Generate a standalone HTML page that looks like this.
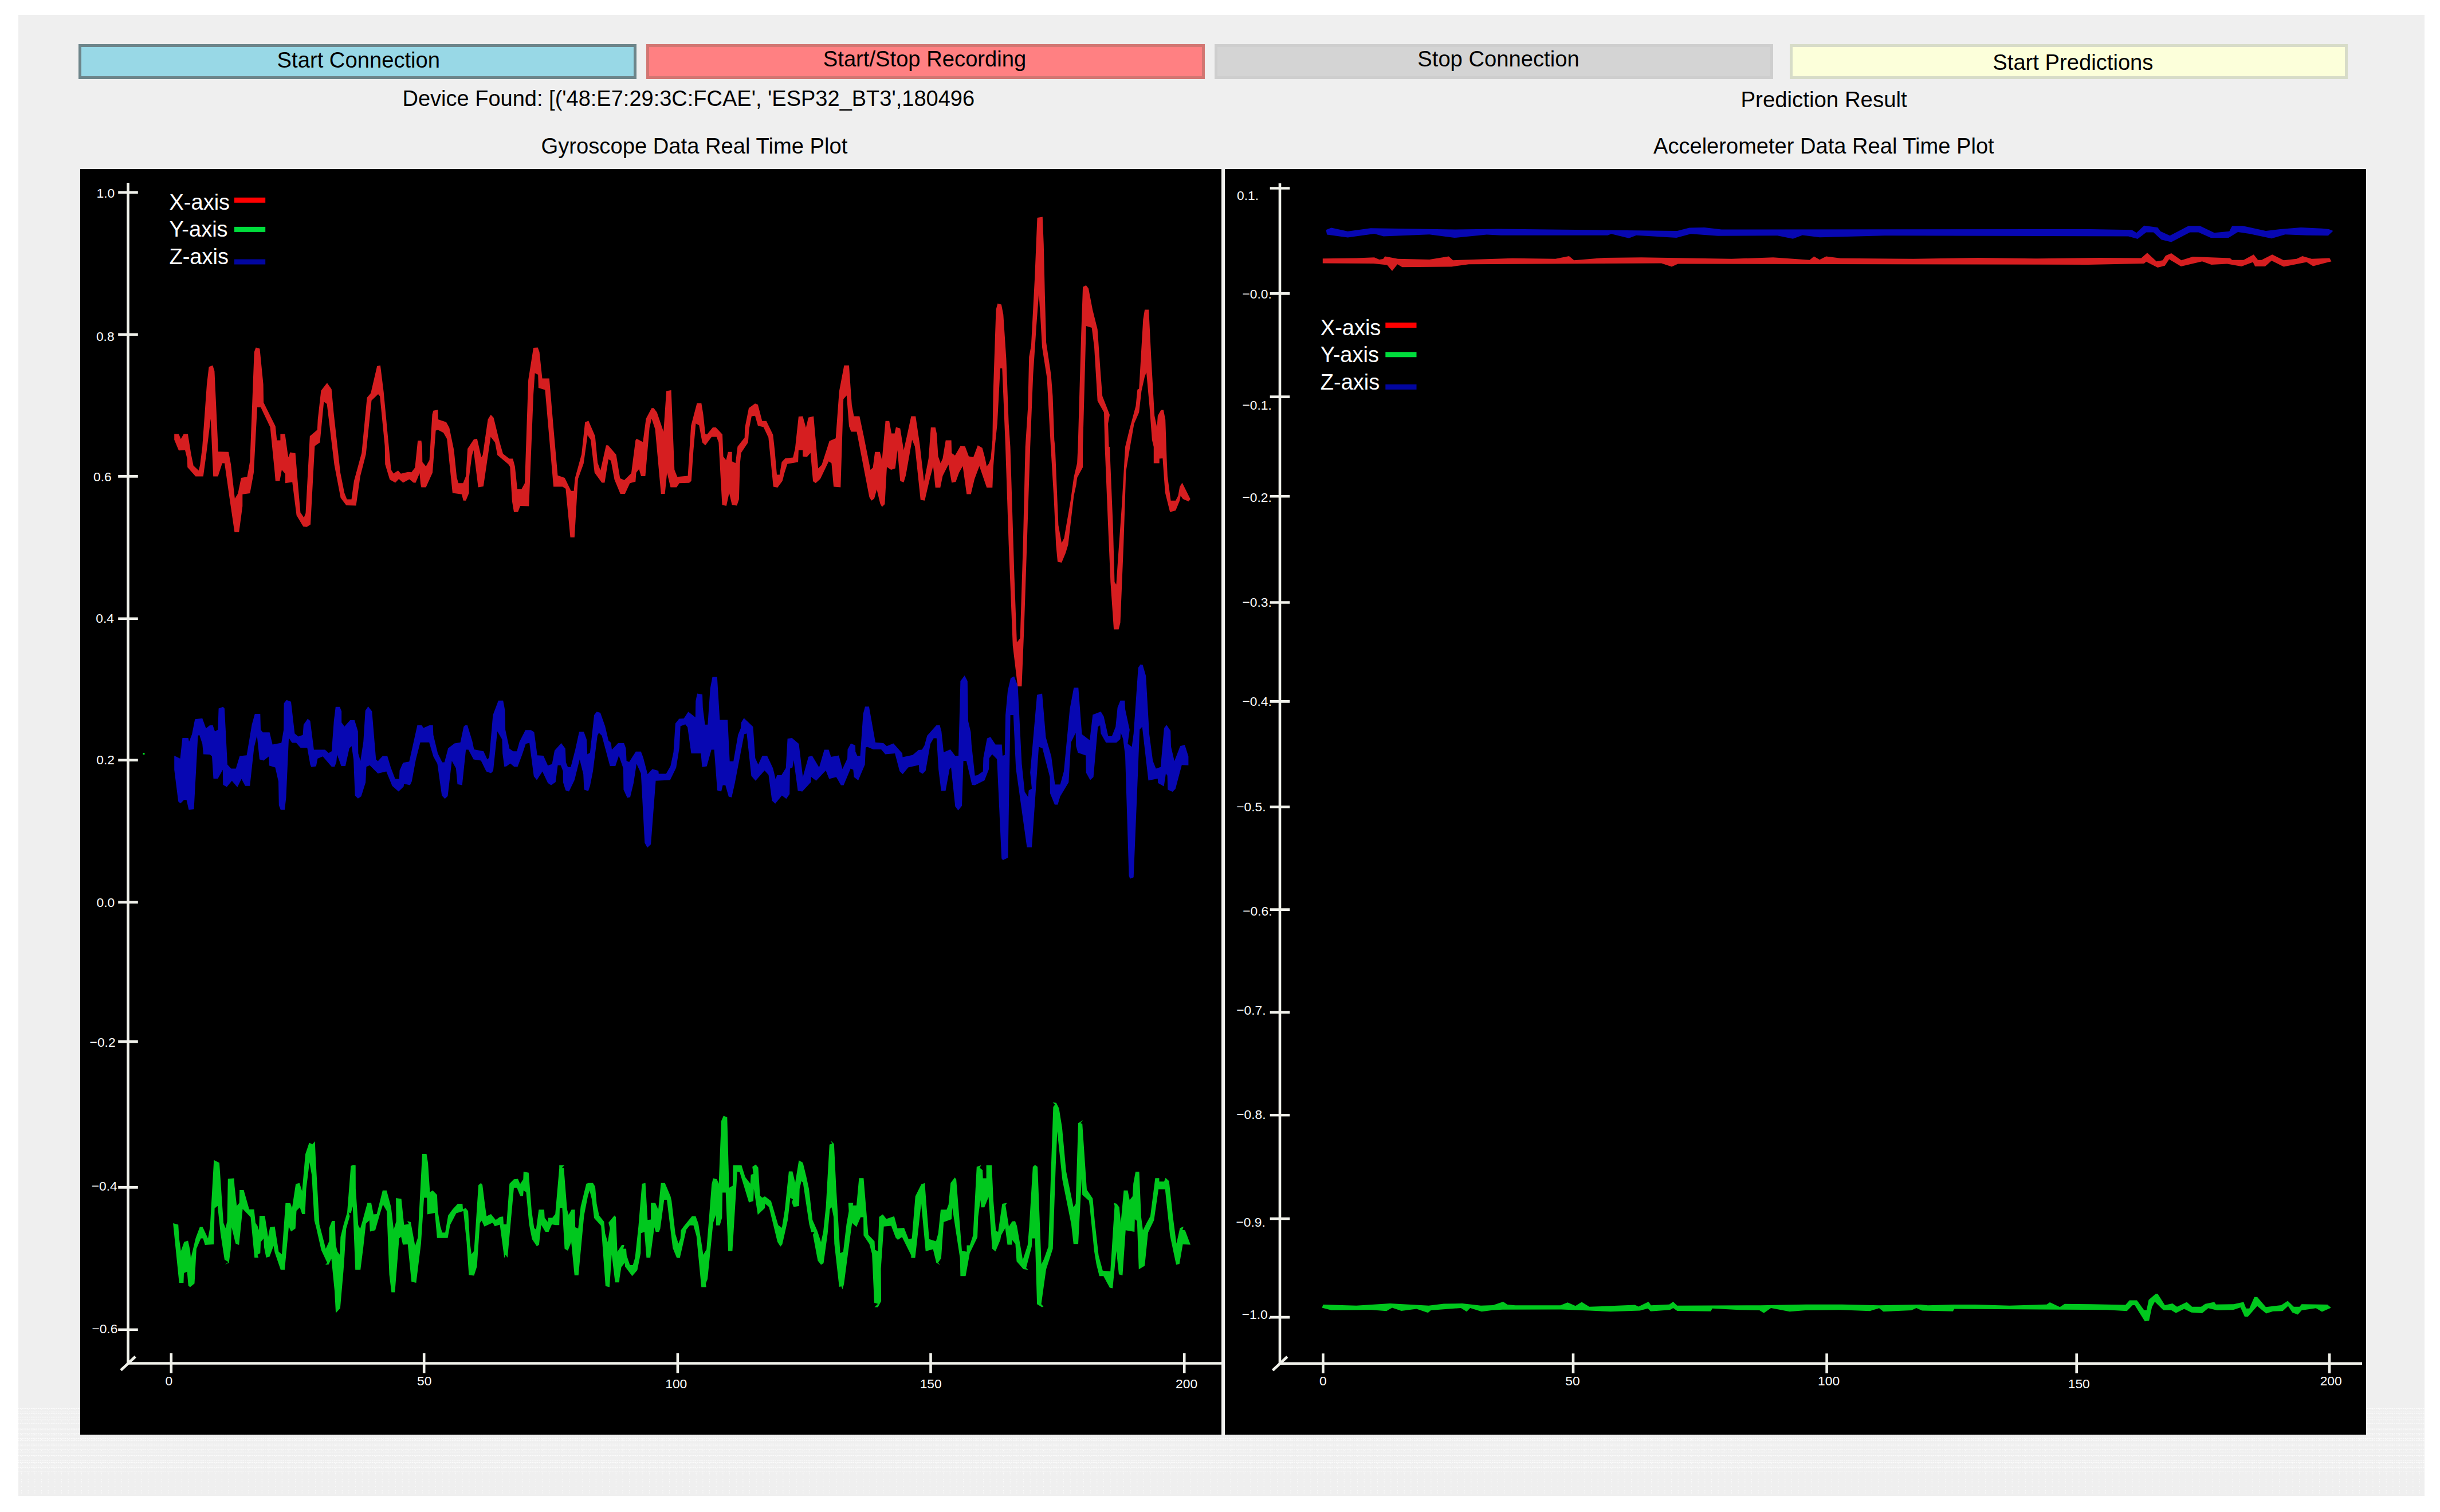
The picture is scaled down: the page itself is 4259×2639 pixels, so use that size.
<!DOCTYPE html>
<html><head><meta charset="utf-8"><title>IMU Real Time Plot</title>
<style>
html,body{margin:0;padding:0;background:#fff;}
body{width:4259px;height:2639px;position:relative;overflow:hidden;font-family:"Liberation Sans",sans-serif;color:#000;}
#panel{position:absolute;left:32px;top:26px;width:4200px;height:2585px;background:#efefef;}
.btn{position:absolute;top:77px;height:61px;box-sizing:border-box;border:5px solid;font-size:38.2px;text-align:left;white-space:nowrap;overflow:hidden;}
.lbl{position:absolute;font-size:38px;white-space:nowrap;line-height:44px;}
</style></head><body>
<div id="panel"></div>
<div class="btn" style="left:137px;width:974px;background:#98d8e6;border-color:#6d858a;line-height:46.8px;padding-left:341.6px">Start Connection</div>
<div class="btn" style="left:1128px;width:975px;background:#ff8082;border-color:#d27672;line-height:42.5px;padding-left:303.8px">Start/Stop Recording</div>
<div class="btn" style="left:2120px;width:975px;background:#d4d4d4;border-color:#cecece;line-height:42.5px;padding-left:349.3px">Stop Connection</div>
<div class="btn" style="left:3124px;width:974px;background:#fcffda;border-color:#d7dcc8;line-height:53.7px;padding-left:349.3px">Start Predictions</div>
<div class="lbl" id="dev" style="left:702.5px;top:150px">Device Found: [('48:E7:29:3C:FCAE', 'ESP32_BT3',180496</div>
<div class="lbl" id="pred" style="left:3038.5px;top:151.7px;font-size:38.4px">Prediction Result</div>
<div class="lbl" id="t1" style="left:944.5px;top:232.8px;font-size:38.2px">Gyroscope Data Real Time Plot</div>
<div class="lbl" id="t2" style="left:2886px;top:232.5px;font-size:38.1px">Accelerometer Data Real Time Plot</div>
<svg width="4259" height="2639" viewBox="0 0 4259 2639" style="position:absolute;left:0;top:0" font-family="Liberation Sans, sans-serif">
<g stroke="#fbfbfb" stroke-width="1.25" fill="none">
<line x1="32" y1="2458.4" x2="4232" y2="2458.4" stroke-dasharray="2.6 1.287" stroke-dashoffset="-2.7"/>
<line x1="32" y1="2464.4" x2="4232" y2="2464.4" stroke-dasharray="2.6 1.287" stroke-dashoffset="-2.7"/>
<line x1="32" y1="2467.4" x2="4232" y2="2467.4" stroke-dasharray="2.6 1.287" stroke-dashoffset="-2.7"/>
<line x1="32" y1="2473.4" x2="4232" y2="2473.4" stroke-dasharray="2.6 1.287" stroke-dashoffset="-2.7"/>
<line x1="32" y1="2478.1" x2="4232" y2="2478.1" stroke-dasharray="2.6 1.287" stroke-dashoffset="-2.7"/>
<line x1="32" y1="2484.1" x2="4232" y2="2484.1" stroke-dasharray="2.6 1.287" stroke-dashoffset="-2.7"/>
<line x1="32" y1="2492.5" x2="4232" y2="2492.5" stroke-dasharray="2.6 1.287" stroke-dashoffset="-2.7"/>
<line x1="32" y1="2495.6" x2="4232" y2="2495.6" stroke-dasharray="2.6 1.287" stroke-dashoffset="-2.7"/>
<line x1="32" y1="2501.5" x2="4232" y2="2501.5" stroke-dasharray="2.6 1.287" stroke-dashoffset="-2.7"/>
<line x1="32" y1="2504.6" x2="4232" y2="2504.6" stroke-dasharray="2.6 1.287" stroke-dashoffset="-2.7"/>
<line x1="32" y1="2510.4" x2="4232" y2="2510.4" stroke-dasharray="2.6 1.287" stroke-dashoffset="-2.7"/>
<line x1="32" y1="2514.7" x2="4232" y2="2514.7" stroke-dasharray="2.6 1.287" stroke-dashoffset="-2.7"/>
<line x1="32" y1="2520.3" x2="4232" y2="2520.3" stroke-dasharray="2.6 1.287" stroke-dashoffset="-2.7"/>
<line x1="32" y1="2523.7" x2="4232" y2="2523.7" stroke-dasharray="2.6 1.287" stroke-dashoffset="-2.7"/>
<line x1="32" y1="2529.3" x2="4232" y2="2529.3" stroke-dasharray="2.6 1.287" stroke-dashoffset="-2.7"/>
<line x1="32" y1="2534.4" x2="4232" y2="2534.4" stroke-dasharray="2.6 1.287" stroke-dashoffset="-2.7"/>
<line x1="32" y1="2540.3" x2="4232" y2="2540.3" stroke-dasharray="2.6 1.287" stroke-dashoffset="-2.7"/>
<line x1="32" y1="2549.6" x2="4232" y2="2549.6" stroke-dasharray="2.6 1.287" stroke-dashoffset="-2.7"/>
<line x1="32" y1="2552.6" x2="4232" y2="2552.6" stroke-dasharray="2.6 1.287" stroke-dashoffset="-2.7"/>
<line x1="32" y1="2558.5" x2="4232" y2="2558.5" stroke-dasharray="2.6 1.287" stroke-dashoffset="-2.7"/>
<line x1="32" y1="2561.6" x2="4232" y2="2561.6" stroke-dasharray="2.6 1.287" stroke-dashoffset="-2.7"/>
<line x1="32" y1="2567.5" x2="4232" y2="2567.5" stroke-dasharray="2.6 1.287" stroke-dashoffset="-2.7"/>
<line x1="37" y1="2460.4" x2="4232" y2="2460.4" stroke-dasharray="1.1 10.56"/>
<line x1="37" y1="2469.4" x2="4232" y2="2469.4" stroke-dasharray="1.1 10.56"/>
<line x1="37" y1="2480.1" x2="4232" y2="2480.1" stroke-dasharray="1.1 10.56"/>
<line x1="37" y1="2494.5" x2="4232" y2="2494.5" stroke-dasharray="1.1 10.56"/>
<line x1="37" y1="2503.5" x2="4232" y2="2503.5" stroke-dasharray="1.1 10.56"/>
<line x1="37" y1="2512.4" x2="4232" y2="2512.4" stroke-dasharray="1.1 10.56"/>
<line x1="37" y1="2522.3" x2="4232" y2="2522.3" stroke-dasharray="1.1 10.56"/>
<line x1="37" y1="2531.3" x2="4232" y2="2531.3" stroke-dasharray="1.1 10.56"/>
<line x1="37" y1="2542.3" x2="4232" y2="2542.3" stroke-dasharray="1.1 10.56"/>
<line x1="37" y1="2554.6" x2="4232" y2="2554.6" stroke-dasharray="1.1 10.56"/>
<line x1="37" y1="2563.6" x2="4232" y2="2563.6" stroke-dasharray="1.1 10.56"/>
<line x1="37" y1="2569.2" x2="4232" y2="2569.2" stroke-dasharray="1.1 10.56"/>
<line x1="37" y1="2571.5" x2="4232" y2="2571.5" stroke-dasharray="1.1 10.56"/>
<line x1="37" y1="2574.3" x2="4232" y2="2574.3" stroke-dasharray="1.1 10.56"/>
<line x1="37" y1="2582.5" x2="4232" y2="2582.5" stroke-dasharray="1.1 10.56"/>
<line x1="37" y1="2585.5" x2="4232" y2="2585.5" stroke-dasharray="1.1 10.56"/>
<line x1="37" y1="2588.4" x2="4232" y2="2588.4" stroke-dasharray="1.1 10.56"/>
<line x1="37" y1="2594.3" x2="4232" y2="2594.3" stroke-dasharray="1.1 10.56"/>
<line x1="37" y1="2601.3" x2="4232" y2="2601.3" stroke-dasharray="1.1 10.56"/>
<line x1="37" y1="2604.3" x2="4232" y2="2604.3" stroke-dasharray="1.1 10.56"/>
<line x1="37" y1="2607.3" x2="4232" y2="2607.3" stroke-dasharray="1.1 10.56"/>
</g>
<rect x="140" y="295" width="1992" height="2209" fill="#000"/>
<rect x="2138" y="295" width="1992" height="2209" fill="#000"/>
<rect x="2132" y="295" width="6" height="2209" fill="#f1f1ef"/>
<g stroke="#f0f1ea" stroke-width="4.6">
<line x1="223.5" y1="319" x2="223.5" y2="2379.5"/>
<line x1="221.5" y1="2379.5" x2="2132" y2="2379.5"/>
<line x1="211.0" y1="2391.5" x2="236.3" y2="2367.7"/>
<line x1="206.2" y1="335.8" x2="240.8" y2="335.8"/>
<line x1="206.2" y1="583.8" x2="240.8" y2="583.8"/>
<line x1="206.2" y1="831.4" x2="240.8" y2="831.4"/>
<line x1="206.2" y1="1079.8" x2="240.8" y2="1079.8"/>
<line x1="206.2" y1="1326.8" x2="240.8" y2="1326.8"/>
<line x1="206.2" y1="1574.8" x2="240.8" y2="1574.8"/>
<line x1="206.2" y1="1817.9" x2="240.8" y2="1817.9"/>
<line x1="206.2" y1="2072.4" x2="240.8" y2="2072.4"/>
<line x1="206.2" y1="2320.7" x2="240.8" y2="2320.7"/>
<line x1="298.8" y1="2362.0" x2="298.8" y2="2396.5"/>
<line x1="740.2" y1="2362.0" x2="740.2" y2="2396.5"/>
<line x1="1182.9" y1="2362.0" x2="1182.9" y2="2396.5"/>
<line x1="1624.5" y1="2362.0" x2="1624.5" y2="2396.5"/>
<line x1="2067.2" y1="2362.0" x2="2067.2" y2="2396.5"/>
</g>
<text x="200.2" y="345.4" font-size="22.8" text-anchor="end" fill="#fff">1.0</text>
<text x="199.6" y="595.3" font-size="22.8" text-anchor="end" fill="#fff">0.8</text>
<text x="194.7" y="839.8" font-size="22.8" text-anchor="end" fill="#fff">0.6</text>
<text x="199" y="1086.7" font-size="22.8" text-anchor="end" fill="#fff">0.4</text>
<text x="200" y="1334.4" font-size="22.8" text-anchor="end" fill="#fff">0.2</text>
<text x="200.2" y="1582.7" font-size="22.8" text-anchor="end" fill="#fff">0.0</text>
<text x="201.6" y="1827.4" font-size="22.8" text-anchor="end" fill="#fff">−0.2</text>
<text x="204.7" y="2077.9" font-size="22.8" text-anchor="end" fill="#fff">−0.4</text>
<text x="205.4" y="2327" font-size="22.8" text-anchor="end" fill="#fff">−0.6</text>
<text x="294.9" y="2417.6" font-size="22.8" text-anchor="middle" fill="#fff">0</text>
<text x="740.7" y="2417.6" font-size="22.8" text-anchor="middle" fill="#fff">50</text>
<text x="1180.3" y="2422.5" font-size="22.8" text-anchor="middle" fill="#fff">100</text>
<text x="1624.7" y="2422.5" font-size="22.8" text-anchor="middle" fill="#fff">150</text>
<text x="2071.1" y="2422.5" font-size="22.8" text-anchor="middle" fill="#fff">200</text>
<g stroke="#f0f1ea" stroke-width="4.6">
<line x1="2234" y1="320" x2="2234" y2="2379.8"/>
<line x1="2232" y1="2379.8" x2="4123" y2="2379.8"/>
<line x1="2221.5" y1="2391.8" x2="2246.8" y2="2368.0"/>
<line x1="2216.7" y1="328.5" x2="2251.3" y2="328.5"/>
<line x1="2216.7" y1="512.4" x2="2251.3" y2="512.4"/>
<line x1="2216.7" y1="692.6" x2="2251.3" y2="692.6"/>
<line x1="2216.7" y1="866.2" x2="2251.3" y2="866.2"/>
<line x1="2216.7" y1="1051.5" x2="2251.3" y2="1051.5"/>
<line x1="2216.7" y1="1224.4" x2="2251.3" y2="1224.4"/>
<line x1="2216.7" y1="1408.2" x2="2251.3" y2="1408.2"/>
<line x1="2216.7" y1="1587.6" x2="2251.3" y2="1587.6"/>
<line x1="2216.7" y1="1767" x2="2251.3" y2="1767"/>
<line x1="2216.7" y1="1946.2" x2="2251.3" y2="1946.2"/>
<line x1="2216.7" y1="2127" x2="2251.3" y2="2127"/>
<line x1="2216.7" y1="2299.1" x2="2251.3" y2="2299.1"/>
<line x1="2309.4" y1="2362.3" x2="2309.4" y2="2396.8"/>
<line x1="2746" y1="2362.3" x2="2746" y2="2396.8"/>
<line x1="3188.6" y1="2362.3" x2="3188.6" y2="2396.8"/>
<line x1="3624.7" y1="2362.3" x2="3624.7" y2="2396.8"/>
<line x1="4066" y1="2362.3" x2="4066" y2="2396.8"/>
</g>
<text x="2197" y="348.5" font-size="22.8" text-anchor="end" fill="#fff">0.1.</text>
<text x="2219.9" y="520.6" font-size="22.8" text-anchor="end" fill="#fff">−0.0.</text>
<text x="2219.9" y="714.7" font-size="22.8" text-anchor="end" fill="#fff">−0.1.</text>
<text x="2219.9" y="875.9" font-size="22.8" text-anchor="end" fill="#fff">−0.2.</text>
<text x="2219.9" y="1058.8" font-size="22.8" text-anchor="end" fill="#fff">−0.3.</text>
<text x="2219.9" y="1231.8" font-size="22.8" text-anchor="end" fill="#fff">−0.4.</text>
<text x="2209.6" y="1415.6" font-size="22.8" text-anchor="end" fill="#fff">−0.5.</text>
<text x="2220.5" y="1597.9" font-size="22.8" text-anchor="end" fill="#fff">−0.6.</text>
<text x="2209.6" y="1770.6" font-size="22.8" text-anchor="end" fill="#fff">−0.7.</text>
<text x="2209.6" y="1952.9" font-size="22.8" text-anchor="end" fill="#fff">−0.8.</text>
<text x="2208.8" y="2141.2" font-size="22.8" text-anchor="end" fill="#fff">−0.9.</text>
<text x="2219" y="2302.4" font-size="22.8" text-anchor="end" fill="#fff">−1.0.</text>
<text x="2309.3" y="2417.6" font-size="22.8" text-anchor="middle" fill="#fff">0</text>
<text x="2744.9" y="2417.6" font-size="22.8" text-anchor="middle" fill="#fff">50</text>
<text x="3192.1" y="2417.6" font-size="22.8" text-anchor="middle" fill="#fff">100</text>
<text x="3628.8" y="2423" font-size="22.8" text-anchor="middle" fill="#fff">150</text>
<text x="4068.7" y="2417.6" font-size="22.8" text-anchor="middle" fill="#fff">200</text>
<text x="295.5" y="366.2" font-size="38" text-anchor="start" fill="#fff">X-axis</text>
<rect x="409" y="344.8" width="54.2" height="9" fill="#ff0000"/>
<text x="295.5" y="412.8" font-size="38" text-anchor="start" fill="#fff">Y-axis</text>
<rect x="409" y="395.9" width="54.2" height="9" fill="#00dc3c"/>
<text x="295.5" y="461.1" font-size="38" text-anchor="start" fill="#fff">Z-axis</text>
<rect x="409" y="452.5" width="54.2" height="9" fill="#0206a0"/>
<text x="2304.8" y="584.7" font-size="38" text-anchor="start" fill="#fff">X-axis</text>
<rect x="2418.3" y="563.0" width="54.2" height="9" fill="#ff0000"/>
<text x="2304.8" y="632.1" font-size="38" text-anchor="start" fill="#fff">Y-axis</text>
<rect x="2418.3" y="614.3" width="54.2" height="9" fill="#00dc3c"/>
<text x="2304.8" y="679.9" font-size="38" text-anchor="start" fill="#fff">Z-axis</text>
<rect x="2418.3" y="670.9" width="54.2" height="9" fill="#0206a0"/>
<rect x="249.5" y="1314" width="3" height="3" fill="#00e020"/>
<polygon points="304.2,1318.9 314.5,1324.1 318.4,1288.0 328.7,1288.0 330.0,1294.4 335.1,1281.5 340.3,1255.2 353.2,1253.7 359.6,1271.2 366.1,1266.1 371.2,1265.3 375.1,1276.4 380.3,1273.8 381.6,1236.4 389.3,1233.8 391.9,1236.4 397.0,1334.4 403.5,1341.4 411.7,1341.4 418.4,1319.5 430.6,1318.2 439.6,1264.8 444.8,1246.0 454.3,1246.0 455.1,1273.8 458.9,1278.2 470.6,1278.2 475.7,1299.6 491.2,1296.5 495.1,1273.8 495.6,1227.4 500.2,1221.7 508.0,1224.8 514.4,1280.3 520.8,1285.4 528.6,1282.8 529.9,1264.8 537.1,1254.5 541.5,1258.3 547.9,1308.6 567.3,1308.6 573.7,1314.3 578.9,1311.2 582.8,1258.3 585.8,1233.8 593.1,1233.8 596.2,1241.6 596.2,1260.9 601.3,1267.9 611.1,1257.0 618.9,1257.0 624.8,1276.4 625.3,1315.1 629.2,1328.0 634.3,1294.4 637.7,1240.3 642.6,1233.1 649.3,1241.6 656.3,1325.4 659.6,1328.5 667.9,1319.5 676.1,1319.5 682.1,1339.6 689.8,1359.4 696.8,1359.4 697.5,1344.7 703.5,1331.3 714.3,1329.3 728.5,1265.6 735.7,1265.6 739.3,1270.5 750.4,1265.6 755.7,1265.6 756.4,1282.8 764.2,1315.1 771.9,1330.6 775.8,1330.6 782.2,1306.0 793.3,1297.5 803.6,1295.7 809.3,1268.6 812.4,1265.6 815.8,1265.6 824.3,1293.2 827.4,1307.9 844.1,1311.2 850.6,1325.4 853.9,1322.3 860.4,1248.0 869.9,1222.7 878.2,1222.7 881.5,1240.3 882.1,1273.8 889.3,1306.8 895.7,1311.2 902.2,1311.2 906.8,1294.4 917.1,1274.3 926.7,1274.3 932.4,1277.7 937.8,1318.2 948.6,1318.9 956.3,1336.2 963.6,1333.6 968.0,1309.9 979.6,1297.0 986.8,1306.6 987.8,1330.6 991.2,1338.8 996.3,1338.8 1004.1,1308.6 1011.0,1276.9 1019.0,1276.9 1023.9,1290.6 1025.2,1316.4 1029.9,1313.8 1037.1,1248.0 1041.5,1242.3 1047.9,1244.1 1056.2,1267.4 1062.1,1292.4 1066.5,1296.5 1068.0,1308.6 1078.9,1297.0 1089.2,1297.0 1092.5,1306.0 1093.6,1328.0 1098.2,1330.0 1109.8,1311.7 1118.8,1311.7 1122.7,1322.0 1130.4,1351.2 1138.7,1342.2 1149.3,1345.3 1149.8,1350.4 1162.7,1350.4 1170.4,1337.0 1175.6,1312.5 1178.9,1262.7 1185.4,1254.5 1193.6,1253.9 1201.4,1242.3 1213.8,1251.9 1214.3,1223.5 1217.0,1210.6 1226.0,1211.9 1226.8,1235.1 1230.6,1264.8 1235.3,1264.8 1239.7,1201.6 1243.5,1181.5 1251.8,1181.5 1256.4,1256.5 1270.1,1256.5 1273.7,1328.7 1280.2,1328.7 1288.2,1282.8 1293.1,1270.7 1293.8,1260.9 1298.5,1253.2 1314.5,1268.6 1318.3,1323.3 1323.5,1334.4 1330.7,1318.9 1339.0,1318.9 1349.3,1340.9 1353.9,1360.2 1356.2,1353.0 1364.0,1353.0 1371.7,1340.4 1374.6,1289.3 1382.3,1288.0 1394.4,1298.3 1401.4,1356.3 1411.2,1320.8 1417.6,1318.9 1429.8,1339.6 1438.8,1308.6 1446.5,1308.6 1450.6,1321.0 1464.1,1318.4 1470.5,1342.2 1479.0,1324.1 1479.5,1307.9 1485.2,1297.5 1493.0,1300.9 1493.2,1312.0 1496.3,1318.9 1501.5,1318.9 1506.6,1246.0 1510.0,1233.3 1516.9,1233.3 1528.0,1295.7 1542.0,1297.0 1547.9,1302.2 1559.5,1297.5 1575.0,1315.1 1575.5,1321.5 1593.0,1317.7 1603.3,1309.1 1609.3,1308.6 1613.7,1300.9 1618.3,1284.1 1634.3,1266.1 1640.2,1265.3 1643.3,1276.4 1647.2,1313.0 1658.8,1307.9 1667.1,1318.9 1673.0,1318.9 1676.4,1188.7 1683.7,1179.1 1688.8,1188.7 1689.9,1258.3 1694.5,1277.7 1695.8,1299.6 1701.7,1353.8 1706.1,1353.0 1715.7,1346.5 1716.4,1322.8 1722.9,1288.8 1728.8,1286.2 1737.6,1299.6 1748.7,1299.6 1750.0,1318.9 1753.8,1317.7 1755.1,1248.0 1759.0,1205.5 1764.1,1183.5 1770.1,1180.4 1776.5,1196.4 1783.5,1333.1 1788.6,1382.1 1794.6,1391.2 1795.6,1379.6 1801.0,1376.5 1798.2,1348.6 1810.1,1212.7 1819.1,1210.6 1825.5,1286.7 1835.1,1320.2 1841.5,1369.2 1850.6,1369.2 1857.0,1346.0 1867.3,1237.7 1874.3,1200.3 1882.3,1200.3 1888.5,1281.5 1902.1,1291.9 1907.3,1247.5 1921.5,1242.1 1926.6,1250.6 1934.4,1284.9 1940.8,1284.9 1947.3,1268.6 1950.6,1235.1 1955.5,1222.7 1963.3,1222.7 1964.0,1237.7 1971.8,1273.8 1968.4,1298.3 1975.6,1303.5 1978.7,1280.3 1986.7,1165.5 1990.6,1159.8 1994.5,1160.3 2000.2,1179.7 2006.1,1281.5 2012.3,1328.0 2017.7,1341.4 2025.9,1338.8 2031.9,1270.7 2036.3,1265.3 2043.2,1275.6 2044.0,1303.0 2049.9,1328.5 2060.0,1302.2 2068.0,1300.1 2074.4,1320.2 2074.4,1335.7 2062.8,1335.2 2051.7,1377.0 2046.6,1382.1 2038.3,1378.3 2037.6,1353.8 2035.0,1349.9 2031.6,1372.6 2021.3,1366.7 2020.8,1358.9 2004.5,1362.3 1993.7,1268.6 1989.3,1273.3 1978.7,1531.2 1972.3,1533.8 1970.5,1527.9 1964.0,1318.9 1960.2,1289.3 1956.3,1279.0 1955.5,1290.1 1948.6,1296.2 1930.5,1296.2 1921.5,1280.3 1920.2,1266.1 1916.3,1268.6 1908.6,1356.3 1902.9,1361.5 1895.7,1348.6 1895.2,1318.4 1881.5,1313.8 1878.2,1302.2 1877.6,1279.0 1869.4,1295.7 1865.3,1365.4 1850.6,1389.9 1846.2,1404.6 1841.0,1404.6 1833.0,1384.7 1832.5,1356.3 1819.6,1306.0 1813.2,1303.5 1801.0,1478.9 1792.5,1478.9 1773.2,1340.9 1768.8,1248.0 1763.6,1248.0 1759.5,1496.9 1750.5,1501.3 1748.2,1498.2 1740.2,1324.9 1731.9,1316.4 1726.7,1323.3 1726.2,1342.2 1718.5,1362.0 1701.7,1370.5 1696.6,1370.0 1686.8,1328.0 1681.6,1328.0 1679.0,1406.6 1672.5,1414.4 1667.3,1407.4 1660.1,1339.6 1657.5,1342.2 1650.5,1380.3 1642.8,1380.3 1638.2,1343.4 1634.8,1288.5 1629.7,1288.5 1624.0,1298.3 1615.7,1345.3 1610.6,1350.4 1604.6,1347.3 1603.9,1335.2 1585.3,1339.6 1575.7,1351.2 1570.3,1346.0 1562.1,1315.1 1545.3,1316.4 1538.1,1307.9 1524.2,1307.9 1513.8,1303.5 1511.0,1304.8 1509.7,1334.4 1498.1,1362.0 1490.6,1356.3 1489.3,1343.4 1484.7,1341.6 1472.6,1370.5 1467.9,1370.5 1459.7,1356.3 1447.3,1359.4 1441.4,1344.7 1424.6,1362.8 1415.6,1355.8 1415.6,1364.9 1400.4,1381.6 1392.6,1380.3 1385.4,1326.7 1383.3,1339.6 1378.9,1341.4 1378.2,1386.0 1372.5,1394.3 1364.8,1388.6 1353.2,1402.8 1347.5,1397.6 1341.5,1352.5 1334.6,1344.7 1318.8,1362.8 1311.4,1354.3 1303.4,1280.3 1299.0,1281.5 1282.7,1366.7 1277.1,1391.7 1271.9,1390.6 1266.2,1370.5 1261.6,1370.5 1259.0,1381.6 1252.0,1379.6 1246.6,1308.6 1241.7,1308.6 1233.7,1337.5 1225.5,1338.8 1223.4,1315.1 1206.5,1315.1 1200.1,1269.2 1196.2,1264.3 1187.7,1267.4 1185.9,1304.8 1180.2,1340.1 1169.7,1361.5 1144.6,1362.8 1136.1,1473.7 1129.9,1479.4 1125.3,1471.1 1118.8,1349.9 1111.1,1333.1 1105.9,1366.7 1100.0,1391.2 1094.9,1392.5 1088.4,1378.3 1087.9,1340.9 1080.2,1318.9 1074.2,1337.0 1064.7,1337.0 1050.5,1284.1 1045.3,1279.0 1042.8,1284.1 1035.0,1346.0 1029.9,1371.8 1026.8,1380.8 1019.5,1378.3 1018.2,1351.2 1011.8,1325.4 1002.8,1361.5 993.2,1381.6 987.3,1379.6 982.9,1365.4 982.7,1346.0 978.8,1335.7 973.6,1335.7 969.8,1364.9 962.0,1370.5 956.3,1366.7 946.8,1346.5 937.0,1361.5 931.8,1355.1 924.1,1296.5 917.7,1298.3 911.2,1317.7 903.5,1338.3 897.5,1338.3 890.6,1332.4 884.1,1337.5 880.3,1338.3 877.2,1315.1 876.4,1290.6 868.1,1276.4 860.9,1345.5 857.0,1349.4 848.8,1346.5 839.5,1327.5 826.6,1325.4 817.6,1308.6 813.2,1308.6 806.7,1370.5 798.5,1368.7 795.9,1340.9 788.7,1328.0 781.5,1389.4 776.6,1394.3 771.2,1388.6 763.4,1333.1 756.4,1320.2 749.1,1295.7 733.6,1295.7 725.9,1325.4 718.7,1364.1 715.6,1370.5 705.3,1368.0 704.5,1373.1 695.7,1381.6 684.6,1371.8 674.3,1346.5 659.6,1349.9 645.4,1335.7 639.5,1338.3 638.2,1365.4 630.5,1389.9 624.8,1393.7 619.6,1388.6 617.1,1325.4 613.7,1302.2 609.8,1306.0 602.9,1337.0 595.6,1337.0 588.4,1316.9 587.1,1330.6 584.0,1338.3 578.9,1338.3 563.4,1320.2 554.4,1324.1 551.8,1337.5 543.3,1338.8 541.5,1334.4 536.3,1305.3 524.7,1305.3 517.0,1296.5 509.8,1296.5 504.1,1288.0 499.4,1392.5 496.9,1413.6 489.9,1413.6 486.8,1405.4 486.0,1364.1 480.4,1339.6 469.8,1336.2 469.3,1320.2 460.2,1327.5 453.0,1325.4 448.6,1284.1 443.5,1304.8 436.2,1371.8 428.0,1371.8 421.5,1359.4 414.3,1373.9 404.8,1362.8 395.8,1373.6 389.3,1369.8 388.8,1343.4 380.3,1358.9 372.5,1358.9 370.0,1320.2 366.6,1316.9 355.0,1316.4 353.2,1298.3 348.0,1282.8 345.5,1284.1 338.5,1412.3 329.5,1413.6 325.6,1396.3 321.0,1396.3 315.0,1402.3 311.2,1398.9 304.2,1343.4" fill="#0707b2"/>
<polygon points="302.1,2134.9 311.2,2137.5 312.7,2161.5 315.8,2183.4 321.5,2167.4 328.2,2165.4 331.8,2182.1 333.1,2196.3 341.6,2160.7 348.8,2141.4 353.7,2141.4 363.0,2161.5 366.6,2142.1 373.3,2024.8 382.9,2029.4 390.1,2134.4 393.7,2143.4 396.5,2131.8 397.8,2057.5 408.6,2056.5 409.4,2069.9 413.3,2104.7 417.7,2099.6 418.2,2077.1 425.4,2077.1 435.0,2110.7 443.5,2110.7 446.0,2134.4 449.4,2139.6 452.0,2147.3 453.0,2122.0 462.3,2122.0 468.0,2158.9 471.3,2142.1 479.6,2140.8 486.5,2184.7 492.0,2189.3 498.4,2100.1 506.7,2100.1 509.8,2108.6 516.2,2066.6 522.7,2064.8 527.3,2078.9 533.0,2014.5 539.7,1994.6 545.4,1997.2 549.7,1992.0 551.0,2020.9 557.5,2137.0 568.6,2179.5 574.5,2166.6 574.5,2143.4 579.4,2131.0 584.6,2131.0 586.1,2173.1 589.2,2184.7 593.1,2189.9 594.4,2158.9 599.5,2138.3 606.0,2116.3 612.4,2035.1 616.3,2033.3 620.7,2033.8 620.9,2075.1 625.3,2138.3 628.7,2144.7 632.5,2131.8 641.3,2099.6 648.0,2099.6 651.9,2119.4 657.6,2118.9 667.9,2077.7 674.8,2077.7 682.6,2106.8 687.2,2146.0 691.6,2131.8 691.1,2091.1 700.6,2092.4 705.3,2137.8 713.8,2136.5 710.9,2131.3 716.9,2133.1 724.6,2174.4 729.3,2160.2 737.0,2013.9 744.5,2013.9 747.1,2029.9 750.4,2080.8 755.2,2077.7 762.9,2085.4 764.2,2113.8 768.6,2140.3 771.9,2151.2 777.1,2151.2 782.2,2121.5 790.0,2110.7 799.0,2100.9 807.3,2100.9 808.0,2110.7 812.7,2108.6 817.1,2113.8 820.2,2167.9 823.0,2189.3 827.4,2183.4 835.1,2068.6 839.5,2064.8 842.1,2067.9 846.7,2104.7 849.3,2122.8 857.0,2118.9 865.3,2129.2 872.5,2124.1 878.2,2123.3 879.0,2137.0 884.1,2137.0 889.3,2066.0 897.0,2058.3 904.0,2057.5 907.9,2066.6 913.3,2058.3 913.8,2044.9 922.8,2046.7 928.0,2113.8 932.4,2143.4 935.7,2146.0 940.4,2111.2 949.9,2111.2 950.7,2125.4 956.3,2133.1 956.9,2125.4 964.1,2125.4 969.2,2118.9 976.2,2039.0 976.2,2033.8 985.2,2033.8 980.8,2038.2 984.2,2039.0 989.9,2111.2 992.5,2120.2 997.6,2111.2 1003.5,2111.2 1004.1,2142.1 1009.2,2144.2 1013.6,2106.0 1023.4,2066.0 1027.3,2064.8 1035.0,2064.8 1038.9,2071.2 1041.5,2100.9 1045.8,2121.5 1054.4,2132.3 1056.2,2152.5 1060.8,2167.9 1064.7,2143.4 1062.1,2133.9 1072.4,2121.5 1075.0,2124.1 1077.6,2184.7 1085.3,2173.1 1089.7,2173.1 1087.9,2179.5 1093.0,2179.5 1093.8,2191.1 1099.5,2207.9 1104.7,2207.9 1108.5,2195.0 1114.5,2139.6 1120.6,2066.0 1126.6,2064.8 1130.4,2129.2 1136.1,2128.5 1136.1,2099.6 1143.9,2099.6 1149.0,2111.2 1153.7,2064.8 1160.6,2064.8 1170.4,2088.0 1172.2,2095.7 1178.9,2153.7 1184.1,2170.5 1187.7,2161.5 1188.5,2147.3 1193.6,2140.3 1207.8,2122.8 1214.3,2122.8 1219.0,2135.7 1224.2,2167.9 1227.5,2189.9 1233.2,2180.8 1238.4,2116.3 1242.2,2067.3 1244.8,2056.5 1251.3,2058.3 1254.6,2066.0 1259.0,1956.4 1262.9,1947.4 1269.3,1950.0 1272.7,2073.0 1278.9,2069.4 1279.6,2033.8 1294.3,2033.8 1300.8,2054.4 1309.8,2066.0 1310.6,2050.6 1315.0,2048.8 1313.2,2036.4 1319.1,2032.5 1323.5,2037.7 1326.6,2086.7 1330.5,2090.6 1335.1,2088.0 1345.9,2096.2 1358.3,2138.3 1364.8,2142.9 1369.9,2111.2 1376.9,2044.6 1383.3,2044.6 1388.0,2064.2 1394.4,2025.3 1401.4,2029.2 1407.3,2053.2 1412.0,2075.1 1418.2,2129.2 1426.7,2148.6 1433.1,2167.9 1437.0,2149.9 1441.6,2106.0 1447.8,1997.7 1452.5,1995.9 1449.9,1990.7 1455.8,1996.4 1459.4,2069.9 1464.1,2147.3 1466.6,2187.3 1471.8,2184.7 1477.5,2137.0 1481.6,2113.8 1480.8,2099.6 1489.3,2099.6 1488.6,2104.0 1495.0,2104.0 1499.4,2056.2 1507.4,2056.2 1515.6,2155.0 1526.5,2166.6 1527.3,2181.3 1532.4,2183.9 1534.5,2124.1 1540.9,2119.4 1547.1,2127.4 1560.8,2122.8 1566.5,2143.9 1578.1,2142.9 1585.8,2162.8 1591.7,2161.5 1597.7,2088.0 1608.0,2067.3 1614.2,2064.8 1617.5,2108.6 1621.9,2162.8 1633.8,2166.6 1637.7,2152.5 1642.0,2111.2 1652.4,2111.2 1655.7,2102.2 1659.3,2064.8 1666.5,2055.2 1669.1,2058.3 1679.0,2182.9 1687.5,2184.7 1687.5,2173.6 1692.7,2173.6 1698.4,2156.3 1704.8,2036.4 1712.6,2033.8 1710.0,2038.2 1715.1,2042.3 1715.7,2056.5 1721.6,2056.5 1721.6,2033.8 1731.1,2033.8 1734.0,2095.7 1738.4,2148.6 1742.2,2149.9 1749.4,2100.9 1757.7,2099.6 1755.1,2103.4 1761.0,2140.8 1766.7,2131.8 1771.9,2131.3 1775.0,2139.6 1785.3,2198.9 1793.8,2173.1 1796.4,2142.1 1802.8,2036.4 1806.7,2033.3 1811.1,2036.4 1817.8,2206.6 1822.2,2197.6 1829.9,2175.7 1833.8,2064.8 1838.4,1931.9 1841.5,1928.1 1837.7,1924.2 1843.6,1924.7 1848.5,1934.5 1853.9,1968.0 1860.9,2044.1 1873.8,2107.3 1877.6,2100.9 1882.0,1960.3 1890.5,1955.1 1886.1,1960.3 1889.2,1961.6 1897.0,2076.4 1907.3,2091.8 1911.2,2134.4 1917.6,2191.1 1924.8,2217.7 1938.2,2219.0 1945.5,2104.7 1944.2,2099.6 1949.3,2100.9 1953.7,2107.3 1956.3,2134.4 1961.5,2077.7 1968.4,2077.7 1971.8,2094.4 1976.9,2088.0 1978.2,2066.0 1982.1,2044.9 1988.5,2044.9 1991.9,2124.1 1995.0,2147.3 2001.4,2134.4 2007.9,2122.8 2016.4,2056.2 2023.4,2056.2 2023.4,2062.2 2031.9,2062.2 2034.5,2055.7 2040.6,2061.4 2047.4,2124.1 2053.5,2170.5 2059.5,2143.4 2065.9,2140.8 2063.9,2146.8 2068.5,2147.3 2078.0,2172.6 2064.6,2171.8 2058.7,2206.1 2053.0,2207.4 2042.2,2156.3 2033.7,2075.8 2022.1,2075.8 2014.3,2129.8 2004.0,2151.2 1998.1,2209.2 1987.8,2215.6 1984.7,2131.0 1980.8,2128.0 1980.3,2149.9 1964.8,2147.3 1959.4,2226.0 1953.0,2224.2 1948.6,2183.4 1942.1,2248.4 1937.0,2247.4 1926.1,2227.3 1918.9,2227.3 1913.7,2206.6 1909.9,2183.4 1902.1,2106.0 1900.8,2095.7 1889.2,2085.4 1888.0,2057.0 1882.0,2171.3 1873.8,2171.3 1869.9,2137.0 1854.4,2059.6 1845.4,1974.5 1842.8,2033.8 1837.7,2179.5 1826.0,2215.6 1817.5,2276.3 1821.4,2280.6 1818.8,2281.4 1810.1,2276.3 1806.7,2161.5 1801.5,2161.5 1800.8,2175.7 1791.2,2213.1 1795.1,2216.4 1786.1,2215.1 1774.5,2201.5 1772.4,2171.3 1766.7,2164.1 1766.2,2172.6 1758.5,2172.6 1754.6,2143.4 1747.4,2156.3 1746.1,2164.1 1737.6,2184.2 1731.9,2179.5 1725.5,2089.3 1718.2,2107.3 1712.6,2107.3 1711.3,2094.4 1707.4,2124.1 1706.1,2159.4 1692.7,2187.3 1685.5,2227.3 1676.4,2227.3 1675.7,2196.3 1662.2,2108.1 1660.9,2128.0 1647.2,2133.1 1642.8,2196.3 1637.4,2204.0 1641.5,2207.9 1634.3,2204.0 1628.6,2180.3 1615.7,2183.9 1608.0,2100.4 1597.4,2195.5 1590.4,2195.5 1590.4,2191.1 1574.5,2158.9 1567.2,2164.1 1563.4,2160.2 1555.6,2139.6 1542.7,2140.8 1537.6,2214.4 1538.1,2271.1 1532.4,2281.4 1526.5,2281.4 1532.4,2275.7 1526.0,2273.7 1522.1,2188.6 1517.5,2171.3 1507.4,2156.3 1507.1,2124.6 1502.2,2124.6 1495.0,2141.6 1487.3,2134.4 1483.4,2162.8 1473.1,2241.4 1470.5,2250.5 1468.7,2245.3 1464.8,2246.1 1456.3,2170.5 1455.0,2124.1 1451.7,2107.3 1448.6,2109.9 1444.7,2152.5 1437.5,2204.8 1433.1,2207.4 1427.4,2200.2 1418.9,2155.0 1421.5,2150.4 1416.3,2150.4 1412.5,2137.0 1401.6,2064.0 1398.8,2061.4 1395.7,2075.1 1394.9,2104.7 1385.4,2106.8 1382.0,2098.3 1384.1,2093.6 1379.5,2090.6 1375.1,2129.2 1365.5,2171.8 1362.2,2175.7 1357.0,2167.4 1342.3,2106.8 1335.6,2100.9 1335.1,2108.6 1322.7,2120.2 1315.8,2075.1 1315.0,2096.2 1307.2,2098.8 1291.2,2045.9 1286.9,2044.9 1278.4,2183.4 1271.1,2183.4 1266.7,2081.5 1261.1,2081.5 1260.3,2125.4 1256.4,2138.8 1250.0,2138.8 1249.5,2120.2 1244.8,2134.4 1235.0,2232.4 1231.9,2240.2 1232.7,2246.6 1224.2,2246.6 1215.7,2157.6 1210.4,2138.8 1204.0,2138.8 1198.0,2146.0 1186.7,2195.5 1181.3,2195.5 1174.3,2178.2 1164.0,2093.9 1159.3,2093.9 1152.4,2144.7 1150.3,2149.9 1144.6,2149.9 1142.1,2142.1 1135.1,2195.0 1128.4,2195.0 1124.8,2149.9 1118.8,2152.5 1118.3,2187.3 1112.4,2216.9 1103.4,2227.3 1091.0,2210.5 1090.5,2204.0 1084.5,2211.8 1081.4,2231.1 1080.9,2238.3 1073.7,2238.3 1067.8,2189.9 1063.9,2246.6 1056.9,2244.8 1049.2,2139.6 1037.1,2126.1 1033.0,2093.1 1029.1,2077.7 1026.0,2088.0 1019.5,2121.5 1009.7,2226.0 1002.8,2226.0 997.1,2167.9 991.2,2182.9 985.5,2179.5 981.4,2108.1 977.0,2108.6 976.2,2138.3 969.8,2138.3 963.3,2137.0 957.6,2149.9 952.0,2149.9 944.7,2137.8 940.9,2172.6 937.0,2175.2 928.7,2162.8 923.6,2137.0 918.4,2080.8 913.8,2077.7 913.0,2087.5 908.1,2087.5 902.2,2073.0 897.0,2073.0 885.9,2195.0 882.3,2189.9 880.3,2195.8 872.5,2137.5 863.5,2140.3 860.1,2133.9 845.4,2140.8 840.8,2130.5 837.7,2134.4 832.5,2210.5 827.4,2226.5 818.4,2225.2 814.5,2167.9 808.8,2113.8 796.4,2117.6 785.6,2138.3 781.5,2160.7 762.9,2160.7 759.0,2117.1 745.8,2119.4 745.2,2090.6 740.1,2090.6 734.9,2170.5 726.4,2238.9 718.2,2237.1 711.7,2171.8 703.2,2172.6 700.1,2158.4 696.8,2161.5 689.3,2255.6 683.3,2255.6 679.5,2224.7 675.1,2113.8 668.4,2102.2 662.7,2120.2 655.0,2147.3 645.9,2149.4 644.7,2130.0 638.7,2135.7 634.3,2175.7 629.2,2216.2 620.2,2216.2 615.8,2105.5 612.4,2117.6 608.5,2116.3 610.6,2122.8 604.2,2144.7 601.3,2192.4 599.5,2218.2 593.8,2283.5 586.1,2291.7 584.0,2253.0 578.4,2196.8 573.7,2207.1 567.8,2207.4 571.1,2204.0 560.8,2182.1 551.8,2142.1 548.7,2130.5 544.1,2050.6 540.2,2028.6 534.5,2075.1 532.5,2118.9 527.3,2118.9 523.4,2107.3 517.5,2113.2 515.7,2144.2 508.0,2149.4 504.1,2140.8 496.9,2216.2 489.9,2216.2 479.6,2186.0 477.5,2174.4 470.6,2193.2 464.6,2195.0 461.0,2177.0 460.2,2161.5 455.1,2167.9 454.3,2187.3 449.4,2189.9 451.2,2195.0 444.2,2195.0 437.5,2124.6 423.6,2109.9 417.2,2173.1 411.2,2170.5 404.3,2142.1 402.7,2180.8 399.6,2204.0 392.4,2207.4 398.8,2202.8 391.9,2198.4 384.9,2152.5 379.8,2104.7 374.6,2109.1 373.3,2171.8 357.8,2173.1 354.5,2161.5 350.6,2161.5 342.9,2179.5 339.5,2240.2 331.8,2246.6 328.7,2244.0 326.6,2219.5 321.0,2222.1 320.4,2238.9 312.7,2238.9 302.1,2134.9" fill="#00c81e"/>
<polygon points="304.2,757.6 312.0,757.6 315.7,766.2 320.6,757.6 327.9,757.6 333.6,793.1 337.7,812.7 346.8,821.2 349.2,811.4 353.1,780.8 361.0,670.7 364.6,640.2 371.2,637.7 374.4,647.5 381.0,788.2 398.9,788.7 403.0,810.2 409.9,870.2 415.3,861.6 420.9,833.9 431.4,832.2 436.3,805.3 443.7,614.5 446.6,606.6 453.4,608.4 459.6,670.7 460.1,702.6 480.8,744.1 483.3,768.6 489.4,768.6 489.4,757.6 497.5,757.6 502.4,793.1 503.4,798.0 506.5,789.4 515.6,791.1 520.0,844.5 524.4,894.6 530.5,903.2 533.5,895.8 540.8,761.3 553.8,750.3 554.7,731.9 560.4,681.8 570.9,668.3 578.7,679.3 582.4,719.7 594.1,824.9 601.2,860.4 605.6,871.4 613.5,871.4 617.9,839.6 631.3,790.6 640.6,694.0 647.2,686.2 658.2,638.9 663.9,637.7 669.7,684.2 676.6,757.6 682.7,820.0 686.9,826.6 694.9,821.2 699.8,826.8 712.1,823.7 718.2,824.2 724.3,816.3 729.2,769.1 735.4,769.1 736.9,779.6 737.3,806.5 743.5,813.9 749.6,802.9 754.5,723.3 756.4,716.7 764.3,715.3 764.7,731.9 778.9,736.8 784.3,746.6 792.4,785.7 797.3,833.5 800.2,843.2 808.3,843.2 813.2,831.0 816.1,783.3 827.1,766.7 832.8,765.7 840.1,798.0 842.6,794.3 851.6,731.9 856.7,723.8 861.6,729.0 871.9,771.1 878.0,791.9 889.0,800.4 895.2,800.4 898.8,813.9 903.0,853.8 910.3,853.8 916.0,843.2 922.1,663.4 931.1,607.1 938.7,606.6 941.6,614.5 946.5,660.5 958.8,660.5 966.1,746.6 973.5,829.8 985.7,833.9 996.7,856.7 1001.6,856.7 1003.6,834.7 1015.1,793.1 1021.2,736.8 1027.3,734.4 1038.8,761.3 1043.2,807.8 1048.1,821.2 1057.9,777.2 1061.5,777.2 1075.5,793.6 1082.3,834.7 1089.7,837.9 1101.9,826.1 1109.3,768.6 1111.2,765.7 1122.2,771.6 1127.6,730.7 1137.4,712.3 1141.1,712.3 1146.7,719.7 1158.2,753.4 1163.1,682.5 1171.6,681.0 1177.3,820.0 1182.2,832.2 1200.6,830.5 1206.2,742.9 1216.5,703.8 1224.3,703.8 1227.5,723.3 1231.2,757.6 1234.1,758.3 1244.1,746.1 1249.5,746.1 1261.0,758.3 1262.5,796.8 1267.4,802.9 1270.8,788.7 1277.7,788.7 1277.7,805.3 1283.8,808.3 1287.4,779.6 1299.7,763.7 1300.2,746.6 1307.0,712.3 1318.0,704.3 1322.9,706.2 1330.3,734.8 1337.6,734.8 1349.3,758.8 1352.3,785.7 1356.0,828.6 1360.8,828.6 1364.5,806.5 1370.6,799.9 1384.1,798.5 1387.8,783.3 1393.9,727.0 1401.2,726.5 1406.8,746.6 1411.0,728.7 1420.1,726.5 1428.1,817.6 1434.3,811.4 1447.7,769.8 1458.7,764.9 1464.8,683.0 1473.4,637.7 1482.0,637.7 1483.2,656.1 1486.9,707.4 1490.5,726.5 1500.3,726.5 1507.7,761.3 1519.4,820.0 1523.6,816.3 1527.2,788.7 1535.8,788.7 1539.5,802.9 1545.6,734.8 1552.2,734.8 1556.1,756.4 1561.5,756.4 1563.9,745.4 1571.3,747.8 1577.4,785.7 1583.5,758.8 1590.4,726.5 1598.2,726.5 1605.5,776.0 1612.9,840.8 1620.8,799.9 1624.8,745.9 1632.7,745.9 1635.0,756.7 1637.6,796.5 1641.8,808.4 1645.5,799.9 1650.7,768.6 1660.6,768.6 1661.2,790.8 1666.9,795.1 1669.7,790.2 1676.8,778.0 1684.5,778.9 1691.0,796.5 1699.0,797.9 1706.7,777.2 1714.6,781.7 1719.5,799.9 1722.3,814.1 1726.0,809.3 1729.4,799.9 1732.3,768.1 1733.7,682.8 1738.5,540.6 1741.4,529.8 1747.9,531.5 1751.3,549.1 1756.4,625.9 1760.7,739.6 1763.5,780.0 1770.6,1007.5 1774.9,1121.2 1780.6,1114.1 1785.7,950.6 1789.7,780.0 1794.2,711.2 1796.2,623.1 1799.9,603.2 1806.2,483.7 1810.5,380.0 1819.8,378.5 1821.8,426.9 1823.8,512.2 1826.1,597.5 1834.6,654.3 1837.5,691.3 1840.3,768.1 1841.7,780.0 1847.4,916.5 1853.1,947.8 1857.4,939.2 1868.7,873.8 1874.4,832.6 1880.1,808.4 1881.5,780.0 1887.2,583.2 1890.1,500.8 1895.8,497.9 1900.0,503.6 1907.1,540.6 1915.7,574.7 1921.3,654.3 1924.2,691.3 1937.0,724.0 1934.1,739.6 1935.6,780.0 1937.0,780.0 1942.7,916.5 1945.5,1016.0 1948.4,1020.3 1951.2,979.0 1958.3,879.5 1964.0,780.0 1971.1,751.0 1982.5,708.4 1985.3,679.9 1988.2,678.5 1995.3,557.7 1998.1,540.6 2005.2,540.6 2009.5,625.9 2015.2,725.4 2019.4,745.3 2020.9,725.4 2026.5,715.5 2030.8,715.5 2034.2,732.5 2036.5,799.9 2037.9,831.2 2043.6,873.8 2052.1,873.8 2056.4,865.3 2059.2,849.7 2063.5,842.6 2077.7,871.0 2074.9,875.3 2064.9,871.0 2060.7,865.3 2059.2,873.8 2052.1,890.9 2042.2,893.7 2033.7,859.6 2029.4,799.9 2023.7,800.5 2023.7,808.4 2013.8,808.4 2013.8,780.0 2010.9,768.1 2006.6,711.2 2001.0,650.1 1998.1,657.2 1992.4,682.8 1988.2,719.7 1979.6,739.6 1972.5,780.0 1965.4,822.7 1961.2,950.6 1955.5,1087.1 1952.6,1098.5 1944.1,1098.5 1938.4,1016.0 1934.1,916.5 1928.5,780.0 1927.0,719.7 1915.7,699.8 1910.0,606.0 1905.7,571.9 1895.8,569.0 1894.3,625.9 1890.1,780.0 1890.1,815.6 1880.1,834.0 1878.7,845.4 1874.4,865.3 1864.5,950.6 1860.2,964.8 1853.1,981.9 1846.0,980.5 1843.2,950.6 1839.7,873.8 1834.1,780.0 1831.8,739.6 1827.5,660.0 1819.0,606.0 1816.1,554.8 1813.3,512.2 1809.0,569.0 1803.3,654.3 1798.2,780.0 1792.0,964.8 1787.7,1092.8 1783.4,1198.0 1776.3,1198.0 1767.8,1126.9 1760.7,950.6 1755.0,780.0 1752.2,711.2 1749.3,643.0 1745.9,643.0 1740.8,739.6 1736.5,780.0 1733.7,817.0 1732.3,851.1 1722.3,851.1 1709.5,813.6 1701.0,836.3 1694.7,862.5 1687.3,862.5 1680.5,813.6 1674.0,824.9 1668.3,841.1 1661.2,842.6 1655.5,810.7 1645.5,830.6 1641.3,851.1 1632.7,851.1 1628.8,813.6 1622.8,836.3 1614.1,873.8 1606.8,872.6 1597.0,779.6 1592.1,767.4 1581.1,829.8 1577.4,842.0 1571.3,839.6 1566.4,785.7 1562.7,817.6 1555.4,820.0 1548.0,815.1 1544.4,879.9 1539.5,884.8 1536.3,878.7 1530.4,854.3 1526.0,870.2 1521.1,873.8 1517.4,867.7 1495.4,753.4 1485.6,753.4 1482.0,744.1 1477.8,690.3 1472.2,696.4 1467.3,850.6 1455.1,849.4 1451.4,808.5 1446.5,805.3 1431.8,835.9 1423.7,843.2 1419.1,840.1 1414.7,790.6 1408.6,797.5 1401.2,796.8 1401.2,785.7 1393.9,785.7 1393.1,806.5 1374.3,809.7 1369.4,824.9 1365.7,839.6 1357.2,851.1 1349.8,849.4 1341.3,763.7 1332.7,745.4 1322.9,742.9 1318.0,725.8 1311.9,726.5 1307.5,749.0 1305.8,772.3 1293.6,790.6 1291.6,810.2 1289.9,871.4 1286.2,882.4 1277.7,881.2 1272.8,860.4 1267.9,882.9 1260.5,881.2 1254.4,772.3 1250.7,762.5 1242.2,762.5 1231.2,777.2 1225.8,772.3 1220.2,742.2 1214.5,739.3 1210.4,785.7 1206.7,839.6 1203.0,842.8 1185.9,843.2 1181.0,850.6 1170.4,850.6 1164.3,824.9 1160.6,862.1 1153.8,862.1 1143.5,749.0 1137.4,730.7 1133.7,746.6 1126.4,831.0 1119.0,831.0 1115.4,818.8 1110.5,824.9 1109.3,840.8 1099.5,843.2 1090.9,862.1 1082.8,862.1 1072.5,837.1 1066.4,804.1 1062.0,801.6 1055.4,842.5 1050.5,842.5 1037.8,824.9 1031.0,767.4 1025.6,759.6 1018.7,809.0 1008.9,835.9 1002.8,937.9 995.5,937.9 987.4,853.0 982.0,849.4 966.1,849.4 951.4,680.5 939.9,676.9 939.2,654.1 933.6,651.2 931.1,687.9 923.3,883.6 908.1,882.9 904.2,893.4 897.1,893.9 893.9,875.1 890.3,815.1 887.3,810.2 868.2,794.3 864.1,772.3 856.5,762.5 843.8,848.9 834.7,850.6 826.6,785.7 823.7,795.5 818.6,834.7 818.6,860.4 813.2,873.8 808.8,873.8 805.9,862.8 789.9,860.4 780.2,766.2 774.0,755.2 764.3,750.3 760.6,751.5 755.0,824.9 743.5,850.6 735.4,850.6 734.1,844.5 732.4,826.1 725.5,842.5 721.9,842.5 714.5,836.4 703.5,842.5 696.2,835.9 690.0,842.5 680.3,837.1 672.2,810.2 671.7,778.4 663.1,691.5 660.0,687.9 648.5,698.9 638.7,793.1 628.9,831.0 621.5,882.4 604.4,881.9 594.6,868.9 583.6,811.4 570.6,705.0 565.3,701.3 558.4,772.3 549.4,778.4 542.0,915.4 535.4,919.8 529.3,919.1 517.6,899.5 510.2,841.5 498.0,843.2 498.0,827.3 491.9,820.0 488.2,839.6 480.8,839.6 479.6,824.9 471.6,745.4 455.2,711.1 449.0,711.1 442.9,824.9 436.3,860.9 423.3,862.8 423.3,883.6 417.2,928.9 409.4,928.9 400.6,868.9 392.0,808.5 387.9,808.5 380.5,831.5 372.2,831.5 367.8,730.7 359.7,795.5 354.8,831.5 341.4,831.5 327.2,815.6 326.7,800.4 323.0,785.7 312.0,786.2 304.2,767.4" fill="#d61e20"/>
<polygon points="2314.5,401.2 2323.8,397.5 2352.5,403.8 2392.5,398.2 2540.0,400.5 2615.0,399.5 2927.5,403.0 2948.8,397.5 2975.0,397.0 3005.0,400.5 3650.0,400.0 3721.2,401.2 3729.2,406.2 3742.5,393.8 3766.2,397.0 3771.2,403.8 3787.5,411.2 3820.0,394.2 3840.0,394.2 3865.0,406.2 3891.2,403.8 3896.2,394.2 3915.0,394.2 3955.0,403.0 3980.0,400.0 4016.2,397.0 4052.5,398.8 4065.0,400.0 4072.5,403.0 4063.8,411.2 4026.2,410.8 3988.8,409.2 3965.0,416.2 3926.2,408.0 3906.2,405.0 3890.0,415.0 3858.8,415.0 3837.5,405.5 3822.5,405.5 3790.0,422.5 3772.5,418.2 3758.8,405.5 3746.2,405.5 3731.2,417.0 3715.0,412.5 3290.0,411.2 3176.2,414.2 3146.2,410.5 3129.5,416.8 3102.5,411.2 2998.8,411.8 2951.2,408.2 2926.2,415.0 2856.2,410.8 2843.2,415.8 2812.5,408.2 2806.2,410.8 2620.0,410.8 2595.0,409.5 2538.8,415.0 2495.0,409.2 2415.0,412.5 2398.8,408.0 2352.5,414.5 2316.2,409.5" fill="#0707b2"/>
<polygon points="2309.5,2277.0 2367.5,2278.8 2426.2,2275.0 2493.8,2278.8 2520.0,2275.5 2552.5,2275.0 2585.0,2278.8 2606.2,2278.0 2623.8,2272.0 2631.2,2277.0 2645.0,2278.2 2723.8,2278.2 2736.2,2273.2 2750.0,2279.2 2760.8,2272.5 2774.2,2280.8 2853.8,2277.5 2860.0,2280.5 2877.5,2272.0 2881.8,2278.2 2913.8,2276.8 2920.5,2272.0 2927.5,2278.8 3072.5,2278.2 3152.5,2276.8 3215.0,2276.8 3280.0,2278.2 3352.5,2277.0 3365.0,2278.2 3410.0,2277.0 3447.5,2277.0 3507.5,2278.8 3572.5,2276.8 3578.0,2273.0 3595.5,2281.2 3603.8,2275.8 3650.0,2276.2 3710.0,2277.5 3717.0,2269.5 3730.0,2269.5 3742.5,2286.8 3746.8,2286.8 3750.5,2268.8 3763.0,2258.0 3766.2,2258.0 3778.8,2278.0 3792.0,2275.0 3800.0,2280.8 3817.0,2272.5 3826.2,2280.8 3842.0,2280.8 3849.2,2275.8 3865.0,2272.5 3868.0,2276.8 3898.8,2276.2 3916.2,2272.5 3920.5,2283.8 3926.2,2283.8 3935.0,2263.8 3940.0,2263.8 3955.0,2281.2 3981.8,2278.0 3993.2,2270.5 4003.8,2280.8 4013.8,2280.8 4017.5,2276.2 4062.5,2277.0 4068.8,2282.5 4053.0,2289.5 4042.5,2283.2 4017.5,2287.0 4010.8,2294.5 4001.2,2290.8 3993.8,2279.5 3984.5,2288.2 3967.5,2288.8 3955.5,2292.5 3940.0,2279.5 3923.8,2298.0 3918.0,2298.0 3910.8,2282.0 3898.0,2286.2 3870.0,2287.0 3854.5,2283.2 3843.8,2292.0 3825.0,2290.8 3812.5,2284.5 3798.0,2291.8 3790.0,2286.8 3776.2,2286.8 3761.2,2272.0 3756.2,2281.2 3751.2,2305.0 3743.8,2306.2 3726.2,2278.0 3722.5,2278.0 3712.5,2288.2 3677.5,2286.2 3411.2,2284.5 3408.8,2288.8 3355.0,2287.5 3345.0,2283.0 3336.2,2287.0 3287.5,2289.2 3280.0,2283.2 3263.8,2288.2 3212.5,2286.2 3151.2,2287.0 3123.8,2289.2 3091.2,2283.0 3078.8,2291.8 3071.2,2287.0 3035.0,2286.2 2988.8,2283.8 2986.2,2288.8 2927.5,2288.0 2920.5,2283.0 2915.0,2286.2 2881.2,2288.8 2876.2,2283.8 2862.5,2287.5 2811.2,2289.2 2775.0,2287.5 2725.0,2285.5 2622.5,2285.8 2605.0,2286.8 2586.2,2289.2 2566.2,2283.0 2560.0,2289.2 2550.0,2283.0 2497.5,2287.0 2492.5,2291.2 2472.5,2284.5 2446.2,2288.0 2430.0,2282.5 2420.0,2288.2 2393.8,2286.2 2323.8,2286.8 2307.5,2282.5" fill="#00c81e"/>
<polygon points="2308.8,451.2 2367.5,450.5 2398.8,449.2 2407.5,453.0 2414.2,452.0 2417.5,447.5 2440.0,451.8 2495.0,453.0 2528.8,447.5 2536.2,454.2 2640.0,450.8 2715.0,451.8 2738.8,447.0 2747.5,454.2 2800.0,450.0 2865.0,449.2 3022.5,451.8 3095.0,449.2 3158.8,453.8 3166.2,447.5 3176.2,453.2 3187.5,447.5 3212.5,450.8 3340.0,451.8 3452.5,450.0 3552.5,451.2 3665.0,450.0 3737.5,450.5 3748.0,441.2 3764.2,456.2 3775.0,454.2 3780.0,446.2 3790.0,442.0 3807.5,454.2 3827.5,448.0 3892.5,450.5 3896.2,453.8 3916.2,453.8 3933.8,444.2 3941.2,453.8 3947.5,453.8 3966.2,444.2 3986.2,454.2 4008.8,451.8 4018.8,447.0 4035.0,451.8 4066.2,450.5 4069.5,456.2 4037.5,464.5 4026.2,457.5 3986.2,465.5 3965.0,455.0 3953.8,465.0 3936.2,465.0 3932.5,457.5 3912.5,465.0 3887.5,460.5 3860.0,462.0 3843.8,456.2 3807.0,465.0 3786.2,452.5 3778.8,463.8 3766.2,467.0 3746.2,456.8 3742.5,460.0 3645.0,462.0 3552.5,461.8 2928.8,460.5 2918.0,465.5 2900.0,459.5 2563.8,461.2 2533.8,465.5 2447.5,466.2 2439.2,461.2 2430.0,473.0 2421.2,462.5 2397.5,460.0 2308.8,459.5" fill="#d61e20"/>
</svg>
</body></html>
